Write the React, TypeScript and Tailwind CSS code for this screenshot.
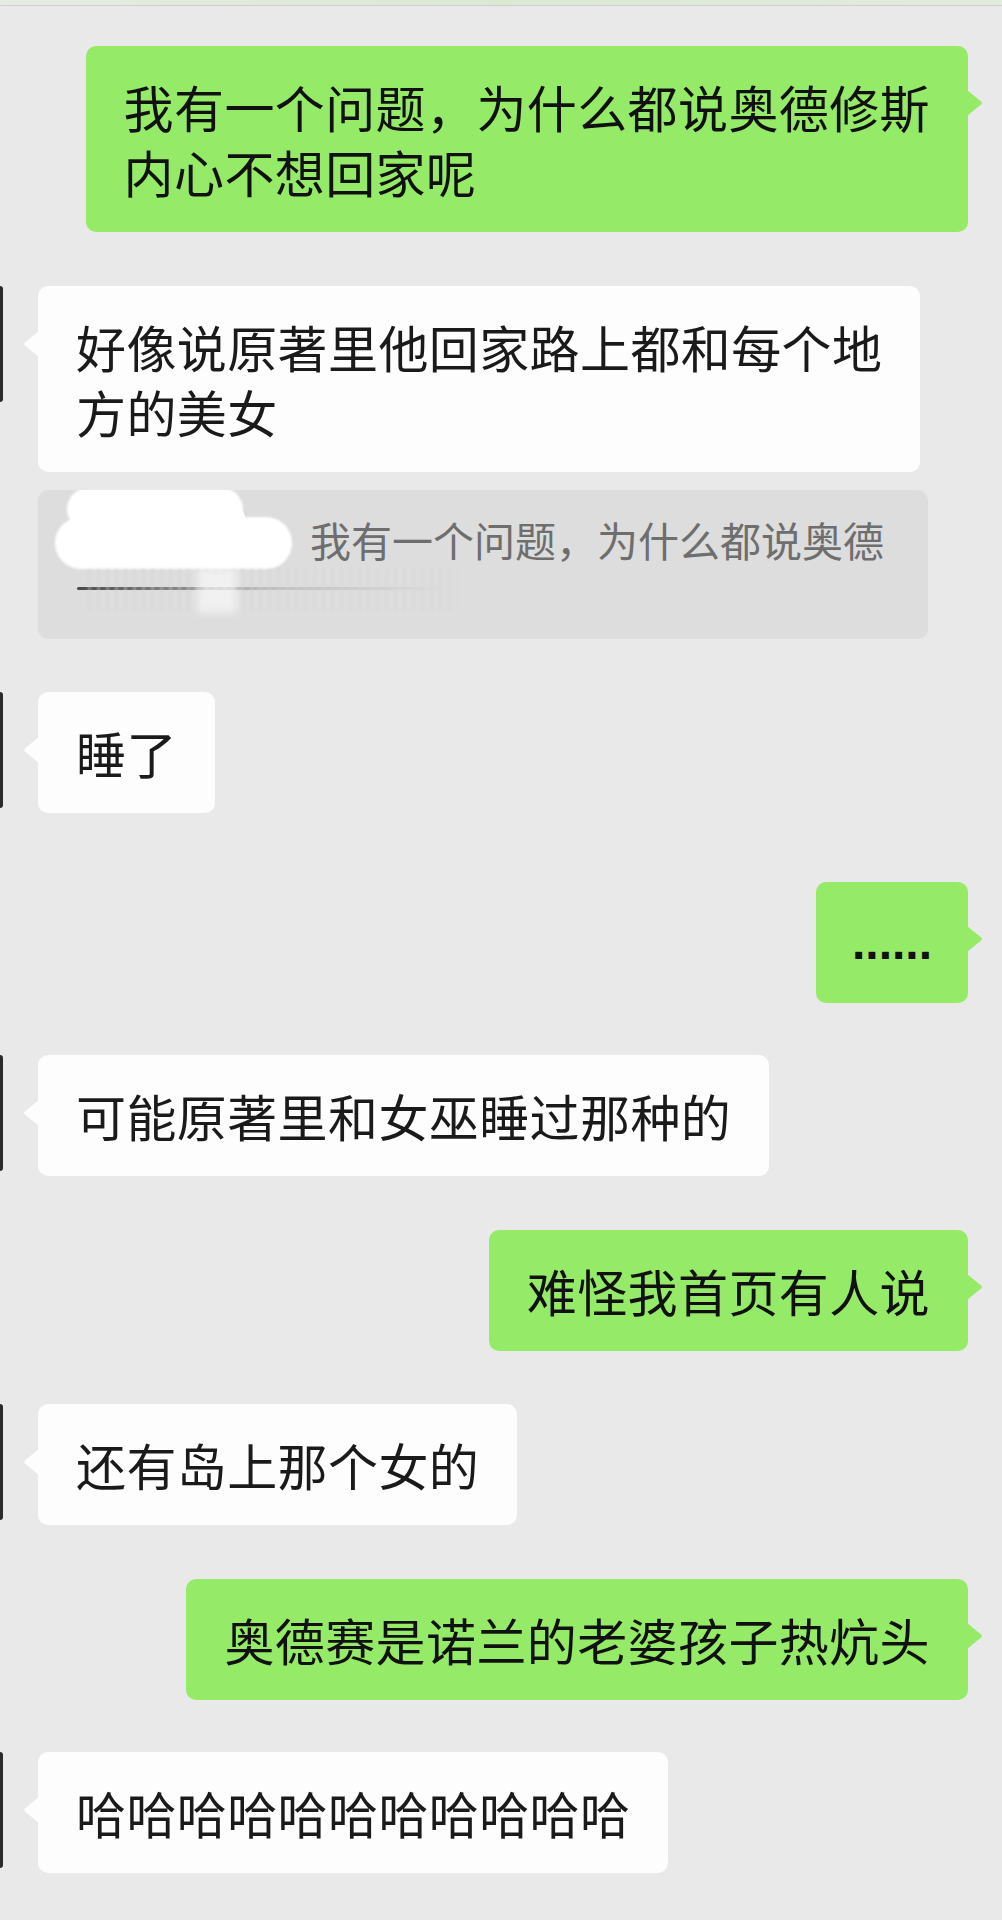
import React from "react";

const FONT = '"Noto Sans CJK SC", "Noto Sans", sans-serif';

function LeftTail() {
  return (
    <svg
      className="absolute left-[-15px] top-[45px]"
      width="16"
      height="26"
      viewBox="0 0 16 26"
    >
      <path d="M16 0 L2.2 11.2 Q0 13 2.2 14.8 L16 26 Z" fill="#fdfdfd" />
    </svg>
  );
}

function RightTail() {
  return (
    <svg
      className="absolute right-[-15px] top-[44px]"
      width="16"
      height="26"
      viewBox="0 0 16 26"
    >
      <path d="M0 0 L13.8 11.2 Q16 13 13.8 14.8 L0 26 Z" fill="#95ea68" />
    </svg>
  );
}

function Avatar() {
  return <div className="w-[3px] h-[116px] bg-[#2b2b2b] rounded-r-[3px] shrink-0" />;
}

function Left({ children, mt }: { children: React.ReactNode; mt: string }) {
  return (
    <div className={`flex items-start gap-[35px] ${mt}`}>
      <Avatar />
      <div className="relative bg-[#fdfdfd] rounded-[10px] px-[38px] py-[28px] text-[50px] leading-[65px] tracking-[0.4px] text-[#1a1a1a]">
        <LeftTail />
        {children}
      </div>
    </div>
  );
}

function Right({
  children,
  mt,
  px = "px-[38px]",
}: {
  children: React.ReactNode;
  mt: string;
  px?: string;
}) {
  return (
    <div className={`flex justify-end pr-[34px] ${mt}`}>
      <div
        className={`relative bg-[#95ea68] rounded-[10px] ${px} py-[28px] text-[50px] leading-[65px] tracking-[0.4px] text-[#111]`}
      >
        <RightTail />
        {children}
      </div>
    </div>
  );
}

function Quote() {
  return (
    <div className="mt-[18px] ml-[38px] w-[890px] h-[149px] bg-[#dddddd] rounded-[10px] overflow-hidden flex flex-col pt-[25px]">
      {/* line 1: redacted name + quoted text */}
      <div className="flex pl-[17px] h-[48px]">
        <div className="relative w-[237px] h-[48px] shrink-0">
          {/* white redaction scribble over the sender name */}
          <div className="absolute left-[12px] top-[-27px] w-[176px] h-[42px] bg-white rounded-full blur-[1px]" />
          <div className="absolute left-0 top-[2px] w-[237px] h-[52px] bg-white rounded-[26px] blur-[1px]" />
          <div className="absolute left-[40px] top-[-10px] w-[150px] h-[40px] bg-white rounded-[14px]" />
        </div>
        <div className="ml-[18px] text-[41px] leading-[48px] text-[#6e6e6e] whitespace-nowrap">
          我有一个问题，为什么都说奥德
        </div>
      </div>
      {/* line 2: blurred-out remainder of the quote */}
      <div className="grid pl-[39px] h-[48px] w-[460px]">
        <div className="col-start-1 row-start-1 ml-[11px] mt-[5px] h-[42px] w-[370px] bg-[repeating-linear-gradient(90deg,#d3d3d3_0_3px,transparent_3px_9px)] blur-[1px] opacity-40" />
        <div className="col-start-1 row-start-1 ml-[120px] mt-[5px] h-[45px] w-[40px] bg-white/60 blur-[4px]" />
        <div className="col-start-1 row-start-1 self-center h-[3px] w-[370px] rounded-full bg-gradient-to-r from-[#4a4a4a] via-[#bdbdbd] to-transparent" />
      </div>
    </div>
  );
}

export default function App() {
  return (
    <div
      className="w-[1002px] min-h-[1920px] bg-[#e9e9e9] overflow-hidden flex flex-col"
      style={{ fontFamily: FONT }}
    >
      <div className="h-[6px] bg-gradient-to-r from-[#e6ebe3] via-[#dbe9d3] to-[#e3ebdf] border-b border-[#cfcfcf]" />

      <Right mt="mt-[40px]">
        我有一个问题，为什么都说奥德修斯
        <br />
        内心不想回家呢
      </Right>

      <Left mt="mt-[54px]">
        好像说原著里他回家路上都和每个地
        <br />
        方的美女
      </Left>

      <Quote />

      <Left mt="mt-[53px]">睡了</Left>

      <Right mt="mt-[69px]" px="px-[36px]">
        <span
          className="block font-bold text-[48px] leading-[65px] tracking-normal"
          style={{ fontFamily: '"Liberation Sans", sans-serif' }}
        >
          ......
        </span>
      </Right>

      <Left mt="mt-[52px]">可能原著里和女巫睡过那种的</Left>

      <Right mt="mt-[54px]">难怪我首页有人说</Right>

      <Left mt="mt-[53px]">还有岛上那个女的</Left>

      <Right mt="mt-[54px]">奥德赛是诺兰的老婆孩子热炕头</Right>

      <Left mt="mt-[52px]">哈哈哈哈哈哈哈哈哈哈哈</Left>
    </div>
  );
}
